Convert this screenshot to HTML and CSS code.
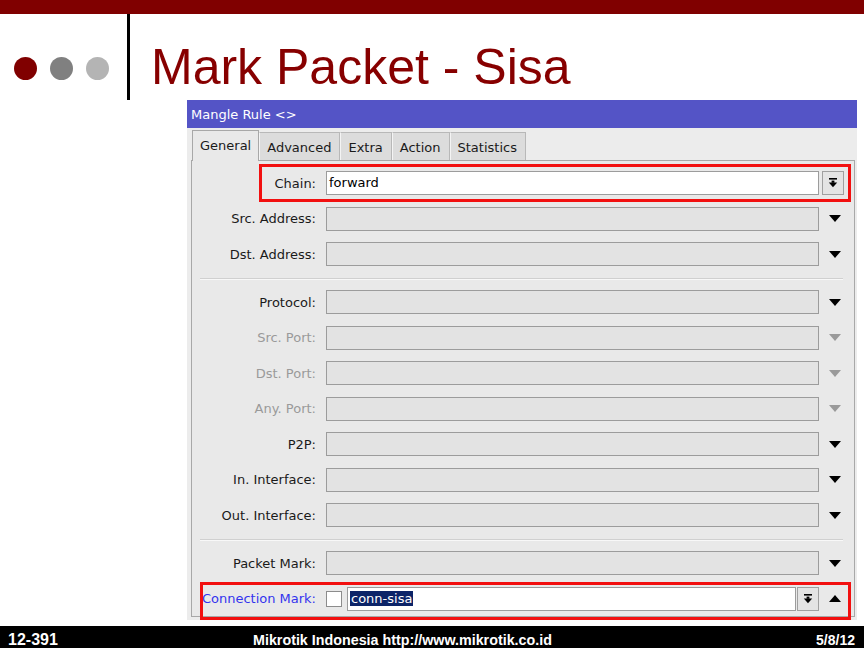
FILE: index.html
```html
<!DOCTYPE html>
<html lang="en">
<head>
    <meta charset="UTF-8">
    <meta name="viewport" content="width=device-width, initial-scale=1.0">
    <title>Mark Packet - Sisa</title>
    <link rel="stylesheet" href="styles.css">
</head>
<body>
    <div class="slide">
        <div class="top-bar"></div>
        <header class="slide-head">
            <div class="dots">
                <span class="dot dot-red"></span>
                <span class="dot dot-gray"></span>
                <span class="dot dot-light"></span>
            </div>
            <h1 class="slide-title">Mark Packet - Sisa</h1>
        </header>

        <main class="slide-body">
            <div class="window">
                <div class="window-title">Mangle Rule &lt;&gt;</div>
                <div class="window-body">
                    <div class="tabs">
                        <div class="tab active">General</div>
                        <div class="tab">Advanced</div>
                        <div class="tab">Extra</div>
                        <div class="tab">Action</div>
                        <div class="tab">Statistics</div>
                    </div>
                    <div class="panel">
                        <div class="row marked marked-chain">
                            <span class="label">Chain:</span>
                            <div class="field field-white">forward</div>
                            <span class="side">
                                <span class="btn">
                                    <svg width="10" height="10" viewBox="0 0 10 10"><rect x="1" y="0" width="8" height="1.6"/><rect x="3.6" y="2.6" width="2.8" height="2.2"/><polygon points="0.8,4.6 9.2,4.6 5,9.2"/></svg>
                                </span>
                            </span>
                        </div>
                        <div class="row">
                            <span class="label">Src. Address:</span>
                            <div class="field"></div>
                            <span class="side"><svg class="arrow" width="12" height="7" viewBox="0 0 12 7"><polygon points="0,0 12,0 6,7"/></svg></span>
                        </div>
                        <div class="row">
                            <span class="label">Dst. Address:</span>
                            <div class="field"></div>
                            <span class="side"><svg class="arrow" width="12" height="7" viewBox="0 0 12 7"><polygon points="0,0 12,0 6,7"/></svg></span>
                        </div>

                        <div class="sep"></div>

                        <div class="row">
                            <span class="label">Protocol:</span>
                            <div class="field"></div>
                            <span class="side"><svg class="arrow" width="12" height="7" viewBox="0 0 12 7"><polygon points="0,0 12,0 6,7"/></svg></span>
                        </div>
                        <div class="row disabled">
                            <span class="label">Src. Port:</span>
                            <div class="field"></div>
                            <span class="side"><svg class="arrow" width="12" height="7" viewBox="0 0 12 7"><polygon points="0,0 12,0 6,7"/></svg></span>
                        </div>
                        <div class="row disabled">
                            <span class="label">Dst. Port:</span>
                            <div class="field"></div>
                            <span class="side"><svg class="arrow" width="12" height="7" viewBox="0 0 12 7"><polygon points="0,0 12,0 6,7"/></svg></span>
                        </div>
                        <div class="row disabled">
                            <span class="label">Any. Port:</span>
                            <div class="field"></div>
                            <span class="side"><svg class="arrow" width="12" height="7" viewBox="0 0 12 7"><polygon points="0,0 12,0 6,7"/></svg></span>
                        </div>
                        <div class="row">
                            <span class="label">P2P:</span>
                            <div class="field"></div>
                            <span class="side"><svg class="arrow" width="12" height="7" viewBox="0 0 12 7"><polygon points="0,0 12,0 6,7"/></svg></span>
                        </div>
                        <div class="row">
                            <span class="label">In. Interface:</span>
                            <div class="field"></div>
                            <span class="side"><svg class="arrow" width="12" height="7" viewBox="0 0 12 7"><polygon points="0,0 12,0 6,7"/></svg></span>
                        </div>
                        <div class="row">
                            <span class="label">Out. Interface:</span>
                            <div class="field"></div>
                            <span class="side"><svg class="arrow" width="12" height="7" viewBox="0 0 12 7"><polygon points="0,0 12,0 6,7"/></svg></span>
                        </div>

                        <div class="sep"></div>

                        <div class="row">
                            <span class="label">Packet Mark:</span>
                            <div class="field"></div>
                            <span class="side"><svg class="arrow" width="12" height="7" viewBox="0 0 12 7"><polygon points="0,0 12,0 6,7"/></svg></span>
                        </div>
                        <div class="row marked marked-conn">
                            <span class="label label-link">Connection Mark:</span>
                            <span class="check"></span>
                            <div class="field field-white field-short"><span class="selected">conn-sisa</span></div>
                            <span class="btn btn-inline">
                                <svg width="10" height="10" viewBox="0 0 10 10"><rect x="1" y="0" width="8" height="1.6"/><rect x="3.6" y="2.6" width="2.8" height="2.2"/><polygon points="0.8,4.6 9.2,4.6 5,9.2"/></svg>
                            </span>
                            <span class="side"><svg class="arrow" width="12" height="7" viewBox="0 0 12 7"><polygon points="0,7 12,7 6,0"/></svg></span>
                        </div>
                    </div>
                </div>
            </div>
        </main>

        <footer class="slide-foot">
            <span class="foot-num">12-391</span>
            <span class="foot-site">Mikrotik Indonesia http://www.mikrotik.co.id</span>
            <span class="foot-date">5/8/12</span>
        </footer>
    </div>
</body>
</html>
```

FILE: styles.css
```css
* {
    box-sizing: border-box;
}
body {
    margin: 0;
    background-color: #fff;
    font-family: "Liberation Sans", Arial, sans-serif;
}
.slide {
    width: 864px;
    height: 648px;
    display: flex;
    flex-direction: column;
    overflow: hidden;
}
.top-bar {
    flex: none;
    height: 14px;
    background-color: #800000;
}

/* slide heading with the three dots */
.slide-head {
    flex: none;
    height: 86px;
    display: flex;
}
.dots {
    width: 127px;
    display: flex;
    align-items: center;
    gap: 13px;
    padding: 22px 0 0 14px;
}
.dot {
    width: 23px;
    height: 23px;
    border-radius: 50%;
}
.dot-red {
    background-color: #800000;
}
.dot-gray {
    background-color: #808080;
}
.dot-light {
    background-color: #b4b4b4;
}
.slide-title {
    margin: 0;
    border-left: 3px solid #000;
    padding: 28px 0 0 21px;
    font-size: 50px;
    font-weight: normal;
    line-height: 1;
    color: #870000;
}

.slide-body {
    flex: 1;
    padding-left: 187px;
}

/* winbox style dialog */
.window {
    width: 670px;
    height: 520px;
    display: flex;
    flex-direction: column;
    background-color: #ececec;
    font-family: "DejaVu Sans", Tahoma, sans-serif;
    font-size: 13px;
    color: #1a1a1a;
}
.window-title {
    flex: none;
    height: 28px;
    line-height: 26px;
    padding: 2px 0 0 4px;
    background-color: #5454c6;
    color: #fff;
}
.window-body {
    flex: 1;
    display: flex;
    flex-direction: column;
    padding: 0 2px 3px 4px;
}
.tabs {
    flex: none;
    height: 32px;
    display: flex;
    align-items: flex-end;
    padding-left: 1px;
}
.tab {
    height: 28px;
    padding: 2px 8px 0 7px;
    line-height: 25px;
    background-color: #dcdcdc;
    border: 1px solid #b8b8b8;
    border-bottom: none;
    border-left-color: #f4f4f4;
}
.tab.active {
    position: relative;
    z-index: 1;
    height: 31px;
    margin-bottom: -1px;
    padding: 0 7px;
    line-height: 29px;
    background-color: #e9e9e9;
    border-color: #a8a8a8;
}
.panel {
    flex: 1;
    padding-top: 10px;
    background-color: #e9e9e9;
    border: 1px solid #a8a8a8;
}
.row {
    position: relative;
    height: 24px;
    display: flex;
    align-items: center;
}
.row + .row {
    margin-top: 11.5px;
}
.label {
    flex: none;
    width: 134px;
    padding-right: 10px;
    text-align: right;
    white-space: nowrap;
}
.label-link {
    color: #3434ee;
}
.disabled .label {
    color: #9a9a9a;
}
.field {
    flex: none;
    width: 493px;
    height: 24px;
    padding-left: 2px;
    line-height: 22px;
    background-color: #e3e3e3;
    border: 1px solid #9c9c9c;
    color: #000;
}
.field-white {
    background-color: #fff;
}
.field-short {
    width: 449px;
}
.selected {
    padding: 0 1px;
    background-color: #0c2468;
    color: #fff;
}
.check {
    flex: none;
    width: 16px;
    height: 16px;
    margin-right: 5px;
    background-color: #fff;
    border: 1px solid #8c8c8c;
}
.side {
    flex: none;
    width: 32px;
    height: 24px;
    display: flex;
    align-items: center;
    justify-content: center;
}
.marked-chain .side {
    justify-content: flex-start;
    padding-left: 3px;
}
.btn {
    width: 22px;
    height: 24px;
    display: flex;
    align-items: center;
    justify-content: center;
    background-color: #e4e4e4;
    border: 1px solid #a0a0a0;
}
.btn-inline {
    flex: none;
    margin-left: 1px;
}
.btn svg,
.arrow {
    fill: #000;
}
.disabled .arrow {
    fill: #9a9a9a;
}
.sep {
    height: 2px;
    margin: 12px 11px 10px 8px;
    border-top: 1px solid #d0d0d0;
    border-bottom: 1px solid #f8f8f8;
}

/* red annotation frames drawn over the dialog */
.marked::after {
    content: "";
    position: absolute;
    right: 3px;
    border: 3px solid #f21010;
    pointer-events: none;
}
.marked-chain::after {
    left: 67px;
    top: -7px;
    bottom: -7px;
}
.marked-conn::after {
    left: 8px;
    top: -5px;
    bottom: -9px;
}

.slide-foot {
    flex: none;
    height: 22px;
    display: flex;
    align-items: baseline;
    padding: 5px 9px 0 8px;
    background-color: #000;
    color: #fff;
    font-size: 14px;
    font-weight: bold;
    line-height: 18px;
}
.foot-num {
    width: 245px;
    font-size: 16px;
}
.foot-site {
    font-size: 14.3px;
}
.foot-date {
    margin-left: auto;
}
```
